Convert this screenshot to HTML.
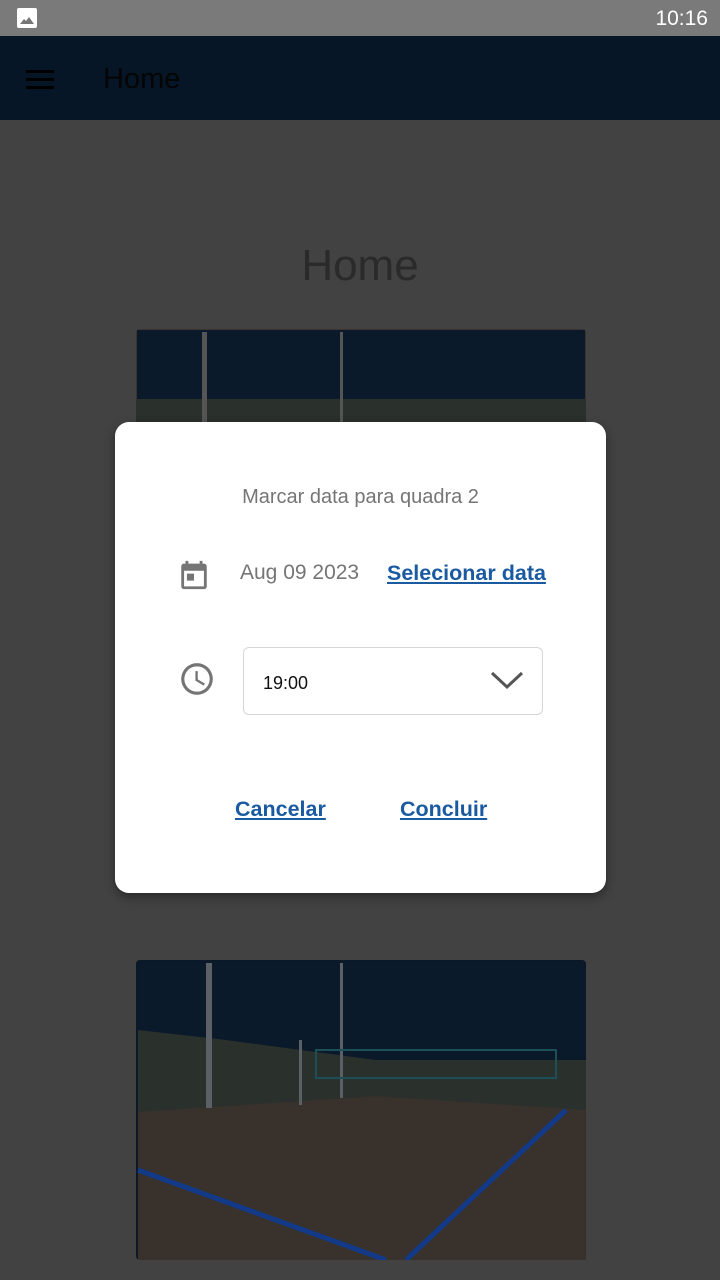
<!DOCTYPE html><html><head><style>
body{margin:0;width:720px;height:1280px;background:#424242;position:relative;overflow:hidden;font-family:"Liberation Sans",Roboto,sans-serif}
.abs{position:absolute}
</style></head><body>
<div class="abs" style="left:0;top:0;width:720px;height:36px;background:#7a7a7a"></div>
<div class="abs" style="left:17px;top:8px;width:20px;height:20px;background:#fff;border-radius:2px"><svg width="20" height="20"><path d="M3 16 L7 11 L9 13 L12 9 L17 16Z" fill="#777"/></svg></div>
<div class="abs" style="right:12px;top:7px;color:#fff;font-size:21px">10:16</div>
<div class="abs" style="left:0;top:36px;width:720px;height:84px;background:#071626"></div>
<div class="abs" style="left:26px;top:70px;width:28px;height:3px;background:#000;box-shadow:0 8px 0 #000,0 16px 0 #000"></div>
<div class="abs" style="left:103px;top:63px;font-size:29px;color:#050505">Home</div>
<div class="abs" style="left:0;width:720px;top:241px;text-align:center;font-size:44px;color:#2a2a2a">Home</div>
<svg class="abs" style="left:136px;top:329px" width="450" height="300"><rect width="450" height="300" rx="4" fill="#3a332e"/><rect x="1" y="1" width="448" height="100" fill="#0b1a2a"/><rect x="0" y="70" width="450" height="30" fill="#2a302c"/><rect x="66" y="3" width="5" height="90" fill="#555"/><rect x="204" y="3" width="3" height="90" fill="#555"/></svg>
<svg class="abs" style="left:136px;top:960px" width="450" height="300"><rect width="450" height="300" rx="4" fill="#0a1828"/><rect x="2" y="2" width="446" height="298" fill="#0b1a2a"/><polygon points="2,70 90,80 240,100 450,100 450,150 2,155" fill="#2a302c"/><polygon points="2,152 240,136 450,150 450,300 2,300" fill="#38312c"/><rect x="70" y="3" width="6" height="145" fill="#5a6066"/><rect x="204" y="3" width="3" height="135" fill="#5a6066"/><rect x="163" y="80" width="3" height="65" fill="#5a6066"/><rect x="180" y="90" width="240" height="28" fill="none" stroke="#1d4f58" stroke-width="2"/><path d="M2 210 L250 300 M270 300 L430 150" stroke="#123a88" stroke-width="5"/></svg>
<div class="abs" style="left:115px;top:422px;width:491px;height:471px;background:#fff;border-radius:14px;box-shadow:0 4px 10px rgba(0,0,0,.4)"></div>
<div class="abs" style="left:115px;width:491px;top:486px;text-align:center;font-size:20px;color:#757575">Marcar data para quadra 2</div>
<svg class="abs" style="left:177px;top:557px" width="34" height="36" viewBox="0 0 24 24"><path fill="#757575" d="M19 4h-1V2h-2v2H8V2H6v2H5c-1.11 0-2 .9-2 2v14a2 2 0 0 0 2 2h14c1.1 0 2-.9 2-2V6c0-1.1-.9-2-2-2zm0 16H5V9h14v11zM7 11h5v5H7z"/></svg>
<div class="abs" style="left:240px;top:561px;font-size:21px;color:#757575">Aug 09 2023</div>
<div class="abs" style="left:387px;top:561px;font-size:21.5px;color:#1a5aa0;font-weight:bold;text-decoration:underline">Selecionar data</div>
<svg class="abs" style="left:178px;top:660px" width="38" height="38" viewBox="0 0 24 24"><path fill="#757575" d="M12 2a10 10 0 1 0 0 20 10 10 0 0 0 0-20zm0 18a8 8 0 1 1 0-16 8 8 0 0 1 0 16zm.5-13H11v6l5.2 3.2.8-1.3-4.5-2.7z"/></svg>
<div class="abs" style="left:243px;top:647px;width:298px;height:66px;border:1px solid #d6d6d6;border-radius:6px"></div>
<div class="abs" style="left:263px;top:673px;font-size:18px;color:#111">19:00</div>
<svg class="abs" style="left:490px;top:670px" width="34" height="20"><path d="M2 3 L17 17 L32 3" stroke="#555" stroke-width="3" fill="none"/></svg>
<div class="abs" style="left:235px;top:797px;font-size:21.5px;color:#1a5aa0;font-weight:bold;text-decoration:underline">Cancelar</div>
<div class="abs" style="left:400px;top:797px;font-size:21.5px;color:#1a5aa0;font-weight:bold;text-decoration:underline">Concluir</div>
</body></html>
